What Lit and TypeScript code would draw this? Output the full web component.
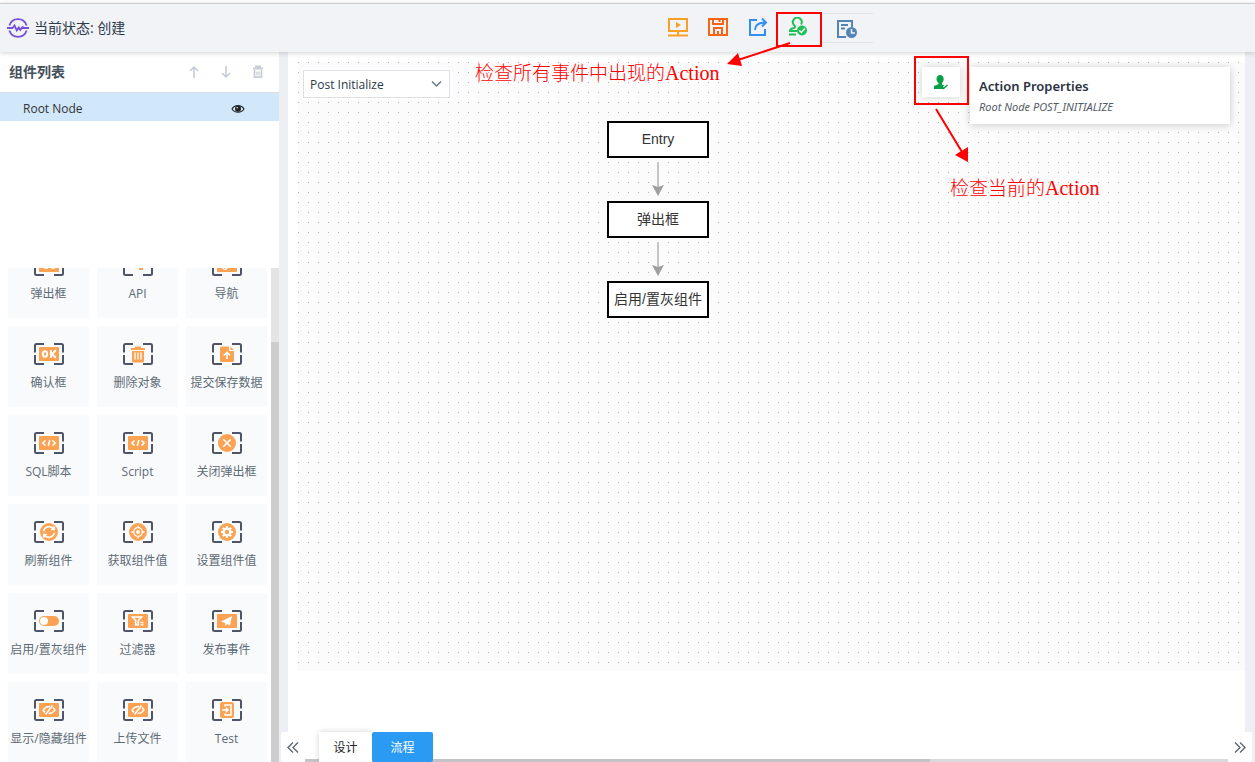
import { LitElement, html, svg, css } from "lit";
import { customElement, property } from "lit/decorators.js";

type Tile = { label: string; icon: string };

const tiles: Tile[] = [
  { label: "弹出框", icon: "popup" },
  { label: "API", icon: "api" },
  { label: "导航", icon: "nav" },
  { label: "确认框", icon: "ok" },
  { label: "删除对象", icon: "trash" },
  { label: "提交保存数据", icon: "upload" },
  { label: "SQL脚本", icon: "code" },
  { label: "Script", icon: "code" },
  { label: "关闭弹出框", icon: "close" },
  { label: "刷新组件", icon: "refresh" },
  { label: "获取组件值", icon: "target" },
  { label: "设置组件值", icon: "gear" },
  { label: "启用/置灰组件", icon: "toggle" },
  { label: "过滤器", icon: "filter" },
  { label: "发布事件", icon: "plane" },
  { label: "显示/隐藏组件", icon: "hidden" },
  { label: "上传文件", icon: "hidden" },
  { label: "Test", icon: "enter" },
];

const plate = svg`<rect class="o" x="5" y="4" width="20" height="14" rx="1"/>`;
const disc = svg`<circle class="o" cx="15" cy="11" r="9"/>`;

const glyphs: Record<string, unknown> = {
  popup: svg`${plate}<path class="w" d="M10 14h4M17 14h4"/>`,
  api: svg`<path class="o" d="M10 4h10v12h-4v-2h-3v-3h-3z"/><path class="w" d="M14 12h3v-2"/>`,
  nav: svg`${plate}<circle class="w" cx="13" cy="13" r="2.3"/><path class="w" d="M15 11l3-2"/>`,
  ok: svg`${plate}<ellipse class="w k" cx="11" cy="11" rx="2.200" ry="2.700"/><path class="w k" d="M17 7.300v7.400M21.800 7.300L18 11l3.800 3.700"/>`,
  trash: svg`<path class="o" d="M8 5h4V3.400h6V5h4v2H8zM9 8h12v10a1.500 1.500 0 0 1-1.500 1.500h-9A1.500 1.500 0 0 1 9 18z"/><path class="w" d="M12 9.500v7M15 9.500v7M18 9.500v7"/>`,
  upload: svg`<path class="o" d="M8 5a1.500 1.500 0 0 1 1.500-1.500H17V8h5v9.500a1.500 1.500 0 0 1-1.500 1.500h-11A1.500 1.500 0 0 1 8 17.500zM18.500 3.500L22 7h-3.500z"/><path class="w t" d="M15 16V9.500M11.800 12.500L15 9.300l3.200 3.200"/>`,
  code: svg`${plate}<path class="w t" d="M11.500 8.500L8.800 11l2.700 2.500M18.500 8.500l2.700 2.500-2.700 2.500M15.800 8l-1.500 6"/>`,
  close: svg`${disc}<path class="w t" d="M11.300 7.300l7.400 7.400M18.700 7.300l-7.400 7.400"/>`,
  refresh: svg`${disc}<path class="w t" d="M9.500 10.300a5.800 5.800 0 0 1 10.300-2.300M20.500 11.700A5.800 5.800 0 0 1 10.200 14M20.300 5.300v3.200H17M9.700 16.700v-3.200H13"/>`,
  target: svg`${disc}<circle class="w" cx="15" cy="11" r="4.300"/><circle cx="15" cy="11" r="1.900" fill="#fff"/><path class="w" d="M15 4.500v2M15 15.500v2M8.500 11h2M19.500 11h2"/>`,
  gear: svg`${disc}<circle cx="15" cy="11" r="3.400" fill="none" stroke="#fff" stroke-width="2.400"/><path class="w k" d="M15 5v2M15 15v2M9 11h2M19 11h2M10.800 6.800l1.400 1.400M17.800 13.800l1.400 1.400M10.800 15.200l1.400-1.400M17.800 8.200l1.400-1.400"/>`,
  toggle: svg`<rect class="o" x="5" y="6" width="20" height="10" rx="5"/><circle cx="10" cy="11" r="4" fill="#fff"/>`,
  filter: svg`${plate}<path class="w t" d="M9.500 7h9l-3.200 3.500V15H12.700v-4.500z"/><path class="w" d="M17.500 12.500h3M17.500 14.800h3"/>`,
  plane: svg`${plate}<path fill="#fff" d="M20 6l-2 9.500-3-1.500-1.500 2-.5-3L9 11.500z"/>`,
  hidden: svg`${plate}<path class="w t" d="M18.500 6.500l-7 9M16 7.500c-3 0-5.500 1.500-6.800 3.600.4.900 1 1.600 1.900 2.200M18.800 8.800c1 .5 1.700 1.300 2.100 2.100-1.300 2.200-3.500 3.600-6.300 3.600"/>`,
  enter: svg`<rect class="o" x="8" y="3" width="14" height="16" rx="2"/><path class="w t" d="M13 7.500V6h6v10h-6v-1.500M10 11h6M13.800 8.700L16 11l-2.200 2.300"/>`,
};

@customElement("tile-icon")
export class TileIcon extends LitElement {
  @property() name = "";
  static styles = css`
    :host { display: block; height: 22px; }
    svg { display: block; }
    .o { fill: #fca253; }
    .w { fill: none; stroke: #fff; stroke-width: 1.3; }
    .t { stroke-width: 1.6; }
    .k { stroke-width: 2; }
    .bracket { fill: none; stroke: #4f5568; stroke-width: 2; }
  `;
  render() {
    return html`<svg width="30" height="22" viewBox="0 0 30 22" aria-hidden="true">
      <path class="bracket" d="M10 1H2.500Q1 1 1 2.500V9.500M1 12V19.500Q1 21 2.500 21H10M20 1H27.500Q29 1 29 2.500V9.500M29 12V19.500Q29 21 27.500 21H20"/>
      ${glyphs[this.name]}
    </svg>`;
  }
}

@customElement("app-root")
export class AppRoot extends LitElement {
  static styles = css`
    * { box-sizing: border-box; }
    :host {
      display: flex;
      flex-direction: column;
      position: relative;
      height: 100vh;
      overflow: hidden;
      background: #fff;
      color: #2c3a4a;
      font: 12px/18px "Open Sans", "Noto Sans CJK SC", sans-serif;
    }
    button { border: 0; padding: 0; margin: 0; background: none; font: inherit; color: inherit; cursor: pointer; }
    svg { display: block; }
    .header {
      display: flex;
      align-items: center;
      flex: 0 0 49px;
      margin-top: 3px;
      border-top: 1px solid #cbccd0;
      background: #f2f3f7;
      box-shadow: 0 1px 5px rgba(0, 0, 0, 0.18);
      position: relative;
      z-index: 1;
    }
    .status { display: flex; align-items: center; gap: 5px; width: 658px; padding-left: 7px; font-size: 14px; }
    .tools { display: flex; align-items: center; }
    .tool { display: grid; place-items: center; width: 40px; height: 30px; padding-bottom: 2px; }
    .history { justify-content: start; width: 53px; margin-left: 2px; padding: 2px 0 0 17px; border: solid #e3e4e8; border-width: 1px 0; }
    .body { display: flex; flex: 1; min-height: 0; background: #eeeff4; }
    .side { display: flex; flex-direction: column; width: 279px; background: #fff; }
    .side-head { display: flex; align-items: center; height: 41px; padding: 0 13px 0 9px; border-bottom: 1px solid #dcdfe5; }
    .side-head h2 { margin: 0 auto 0 0; font-size: 14px; font-weight: 700; color: #45505c; }
    .mini { display: grid; place-items: center; width: 16px; height: 20px; margin-left: 16px; }
    .tree { height: 175px; }
    .node { display: flex; align-items: center; justify-content: space-between; width: 100%; height: 28px; padding: 3px 34px 0 23px; background: #d1e8fb; color: #333; }
    .palette { display: flex; flex: 1; min-height: 0; }
    .tiles { display: grid; grid-template-columns: repeat(3, 81px); grid-auto-rows: 81px; gap: 8px; flex: 1; padding: 0 4px 8px 8px; overflow: hidden; }
    .tile { display: flex; flex-direction: column; align-items: center; gap: 9px; padding-top: 17px; background: #f9fafc; color: #5d6b75; white-space: nowrap; }
    .track { width: 8px; padding-top: 74px; background: #e4e4e4; }
    .thumb { height: 100%; background: #cdcdcd; }
    .work { display: flex; flex-direction: column; flex: 1; min-width: 0; margin: 0 3px 0 2px; }
    .stage { flex: 1; margin: 0 7px; padding: 10px 0 61px 10px; background: #fff; }
    .canvas {
      position: relative;
      height: 100%;
      background-image: linear-gradient(90deg, transparent 1px, #fbfbfb 1px), linear-gradient(#b4b4b4 1px, #fbfbfb 1px);
      background-size: 10px 10px;
    }
    .event {
      position: absolute; left: 5px; top: 8px;
      display: block; width: 147px; height: 28px;
      box-shadow: 0 0 0 2px #fff;
    }
    .event select {
      appearance: none; width: 100%; height: 28px; padding: 1px 6px 0; margin: 0; border: 1px solid #dcdfea; border-radius: 0;
      background: #fff; color: #2c3a4a; font: inherit;
    }
    .event svg { position: absolute; right: 8px; top: 10px; pointer-events: none; }
    .step {
      position: absolute; left: 309px; width: 102px; height: 37px; border: 2px solid #000; background: #fff;
      color: #333; font: 14px/32px "Liberation Sans", "Noto Sans CJK SC", sans-serif; text-align: center; white-space: nowrap;
    }
    .s1 { top: 59px; }
    .s2 { top: 139px; }
    .s3 { top: 219px; }
    .link { position: absolute; left: 354px; }
    .l1 { top: 100px; }
    .l2 { top: 180px; }
    .float { position: absolute; top: 5px; right: 15px; display: flex; align-items: flex-start; gap: 10px; }
    .check { display: grid; place-items: center; width: 38px; height: 30px; background: #fff; box-shadow: 0 0 8px rgba(0, 0, 0, 0.16); }
    .card { width: 260px; height: 57px; padding: 9px; background: #fff; box-shadow: 0 1px 8px rgba(0, 0, 0, 0.2); font-family: "Noto Sans", sans-serif; }
    .card h3 { margin: 0; font-size: 13px; line-height: 20px; font-weight: 600; color: #29323f; }
    .card p { margin: 3px 0 0; font-size: 11px; line-height: 16px; font-style: italic; color: #525c68; }
    .bottom { display: flex; height: 30px; background: #fff; border-radius: 2px; }
    .more { display: grid; place-items: center; width: 24px; height: 30px; color: #5c6872; }
    .scroll { display: flex; flex: 1; padding-left: 14px; background: linear-gradient(#c3c3c8, #c3c3c8) 0 100% / 625px 3px no-repeat, linear-gradient(#dadade, #dadade) 0 100% / 100% 3px no-repeat; }
    .tab { width: 53px; height: 30px; padding-top: 2px; background: #fff; color: #222; box-shadow: 0 0 6px rgba(0, 0, 0, 0.18); }
    .tab.on { position: relative; width: 61px; border-radius: 2px; background: #2b9af3; color: #fff; box-shadow: none; }
    .marks { position: absolute; inset: 0; z-index: 2; pointer-events: none; }
    .marks svg { position: absolute; left: 0; top: 0; }
    .note { position: absolute; color: #f00; font: 300 19px/24px "Noto Sans CJK SC", sans-serif; white-space: nowrap; }
    .latin { font: 20px/24px "Liberation Serif", serif; }
    .n1 { left: 475px; top: 60px; }
    .n2 { left: 950px; top: 175px; }
  `;

  firstUpdated() {
    this.renderRoot.querySelector(".tiles")!.scrollTop = 31;
  }

  private link(cls: string) {
    return html`<svg class="link ${cls}" width="12" height="34" viewBox="0 0 12 34" aria-hidden="true">
      <path d="M6 0V26" stroke="#c4c4c4" stroke-width="2"/><path d="M0 23l6 2 6-2-6 11z" fill="#a0a0a0"/>
    </svg>`;
  }

  render() {
    return html`
      <header class="header">
        <div class="status">
          <svg width="22" height="20" viewBox="0 0 22 20" fill="none" stroke="#7451d8" stroke-width="1.800" aria-hidden="true">
            <path d="M2.400 7.500A9 9 0 0 1 19.600 7.500M2.400 12.500A9 9 0 0 0 19.600 12.500"/>
            <path d="M0 10h5.500l2-2.500 2.300 5 2-3 1.500 2.500L15.500 9l1.500 1h5"/>
          </svg>
          <span>当前状态: 创建</span>
        </div>
        <nav class="tools">
          <button class="tool" aria-label="预览">
            <svg width="20" height="20" viewBox="0 0 20 20" fill="none" stroke="#f9a028" stroke-width="2"><path d="M1 2h18v12H1zM10 14v4M0 18.500h20"/><path d="M8 5l5 3-5 3z" fill="#f9a028" stroke="none"/></svg>
          </button>
          <button class="tool" aria-label="保存">
            <svg width="20" height="20" viewBox="0 0 20 20" fill="none" stroke="#fa6414" stroke-width="2"><path d="M1 2h18v16H1zM5 2v5h10V2M11.500 2v3M6 18v-7h8v7M10 18v-4"/></svg>
          </button>
          <button class="tool" aria-label="导出">
            <svg width="20" height="20" viewBox="0 0 20 20" fill="none" stroke="#318ff3" stroke-width="2"><path d="M9 3H2v15h15v-6M7 13c0-5 3-7.500 11-7.500M14 1.500l4 4-4 4"/></svg>
          </button>
          <button class="tool" aria-label="检查">
            <svg width="20" height="20" viewBox="0 0 20 20" fill="none" stroke="#1fc058" stroke-width="2"><path d="M9 14H2c0-2 1-2.500 4-3 1.500-.5 1-2 0-3A4.400 4.400 0 1 1 13 7.500M1 17.500h7"/><circle cx="14" cy="13.500" r="5" fill="#1fc058" stroke="none"/><path d="M11.300 13.500l2 2 3.500-4" stroke="#f2f3f7" stroke-width="1.500"/></svg>
          </button>
          <button class="tool history" aria-label="历史">
            <svg width="20" height="20" viewBox="0 0 20 20" fill="none" stroke="#5285b4" stroke-width="2"><path d="M15 8V2H1v16h8M4 6h7M4 9.500h4"/><circle cx="14.500" cy="13.500" r="5.500" fill="#5285b4" stroke="none"/><path d="M14.500 10v4H18" stroke="#f2f3f7" stroke-width="1.500"/></svg>
          </button>
        </nav>
      </header>
      <div class="body">
        <aside class="side">
          <div class="side-head">
            <h2>组件列表</h2>
            <button class="mini" aria-label="上移"><svg width="12" height="14" viewBox="0 0 12 14" fill="none" stroke="#c3c9d6" stroke-width="1.500"><path d="M6 13V2M2 6l4-4 4 4"/></svg></button>
            <button class="mini" aria-label="下移"><svg width="12" height="14" viewBox="0 0 12 14" fill="none" stroke="#c3c9d6" stroke-width="1.500"><path d="M6 1v11M2 8l4 4 4-4"/></svg></button>
            <button class="mini" aria-label="删除"><svg width="12" height="14" viewBox="0 0 12 14" fill="none" stroke="#c8ccd4" stroke-width="1.800"><path d="M1 3.500h10M4 3V1.500h4V3M2.500 5v7.200h7V5"/><path d="M5 6.500v4M7 6.500v4" stroke-width="1.200"/></svg></button>
          </div>
          <div class="tree">
            <button class="node">
              <span>Root Node</span>
              <svg width="14" height="10" viewBox="0 0 14 10" aria-hidden="true"><path d="M1 5C3.500 .5 10.500 .5 13 5 10.500 9.200 3.500 9.200 1 5z" fill="none" stroke="#222" stroke-width="1.100"/><circle cx="7" cy="4.700" r="3" fill="#222"/><circle cx="6.200" cy="3.700" r=".8" fill="#d1e8fb"/></svg>
            </button>
          </div>
          <div class="palette">
            <div class="tiles">
              ${tiles.map((t) => html`<button class="tile"><tile-icon name=${t.icon}></tile-icon><span>${t.label}</span></button>`)}
            </div>
            <div class="track"><div class="thumb"></div></div>
          </div>
        </aside>
        <main class="work">
          <div class="stage">
            <div class="canvas">
              <label class="event">
                <select aria-label="Event"><option>Post Initialize</option></select>
                <svg width="11" height="8" viewBox="0 0 11 8" fill="none" stroke="#6b7888" stroke-width="1.500"><path d="M1 1.500l4.500 4.500L10 1.500"/></svg>
              </label>
              <div class="step s1">Entry</div>
              ${this.link("l1")}
              <div class="step s2">弹出框</div>
              ${this.link("l2")}
              <div class="step s3">启用/置灰组件</div>
              <div class="float">
                <button class="check" aria-label="检查当前">
                  <svg width="14" height="15" viewBox="0 0 14 15" fill="#0aa146"><path d="M6 0c2.500 0 3.700 1.700 3.700 4 0 1.800-.8 3-1.700 4v1.500l2.500 1L8.500 12l2 2H0v-2.500C0 10.300 3 10 4.500 9V8C3.300 7 2.500 5.800 2.500 4 2.500 1.700 3.800 0 6 0z"/><path d="M7.500 11.500l2 2 4-3.500" fill="none" stroke="#0aa146" stroke-width="1.500"/></svg>
                </button>
                <section class="card"><h3>Action Properties</h3><p>Root Node POST_INITIALIZE</p></section>
              </div>
            </div>
          </div>
          <footer class="bottom">
            <button class="more" aria-label="向左"><svg width="12" height="11" viewBox="0 0 12 11" fill="none" stroke="currentColor" stroke-width="1.400"><path d="M6 .5l-5 5 5 5M11 .5l-5 5 5 5"/></svg></button>
            <div class="scroll"><button class="tab">设计</button><button class="tab on">流程</button></div>
            <button class="more" aria-label="向右"><svg width="12" height="11" viewBox="0 0 12 11" fill="none" stroke="currentColor" stroke-width="1.400"><path d="M1 .5l5 5-5 5M6 .5l5 5-5 5"/></svg></button>
          </footer>
        </main>
      </div>
      <div class="marks">
        <svg width="1255" height="200" viewBox="0 0 1255 200" fill="none" stroke="#f00" stroke-width="2" aria-hidden="true">
          <rect x="777" y="13" width="44" height="33"/>
          <rect x="915" y="57" width="53" height="47"/>
          <path d="M790 43L738 60M936 109L962 152"/>
          <path d="M727 64l11-11 4 13zM968 162l-13-7 13-8z" fill="#f00" stroke="none"/>
        </svg>
        <span class="note n1">检查所有事件中出现的<span class="latin">Action</span></span>
        <span class="note n2">检查当前的<span class="latin">Action</span></span>
      </div>
    `;
  }
}
